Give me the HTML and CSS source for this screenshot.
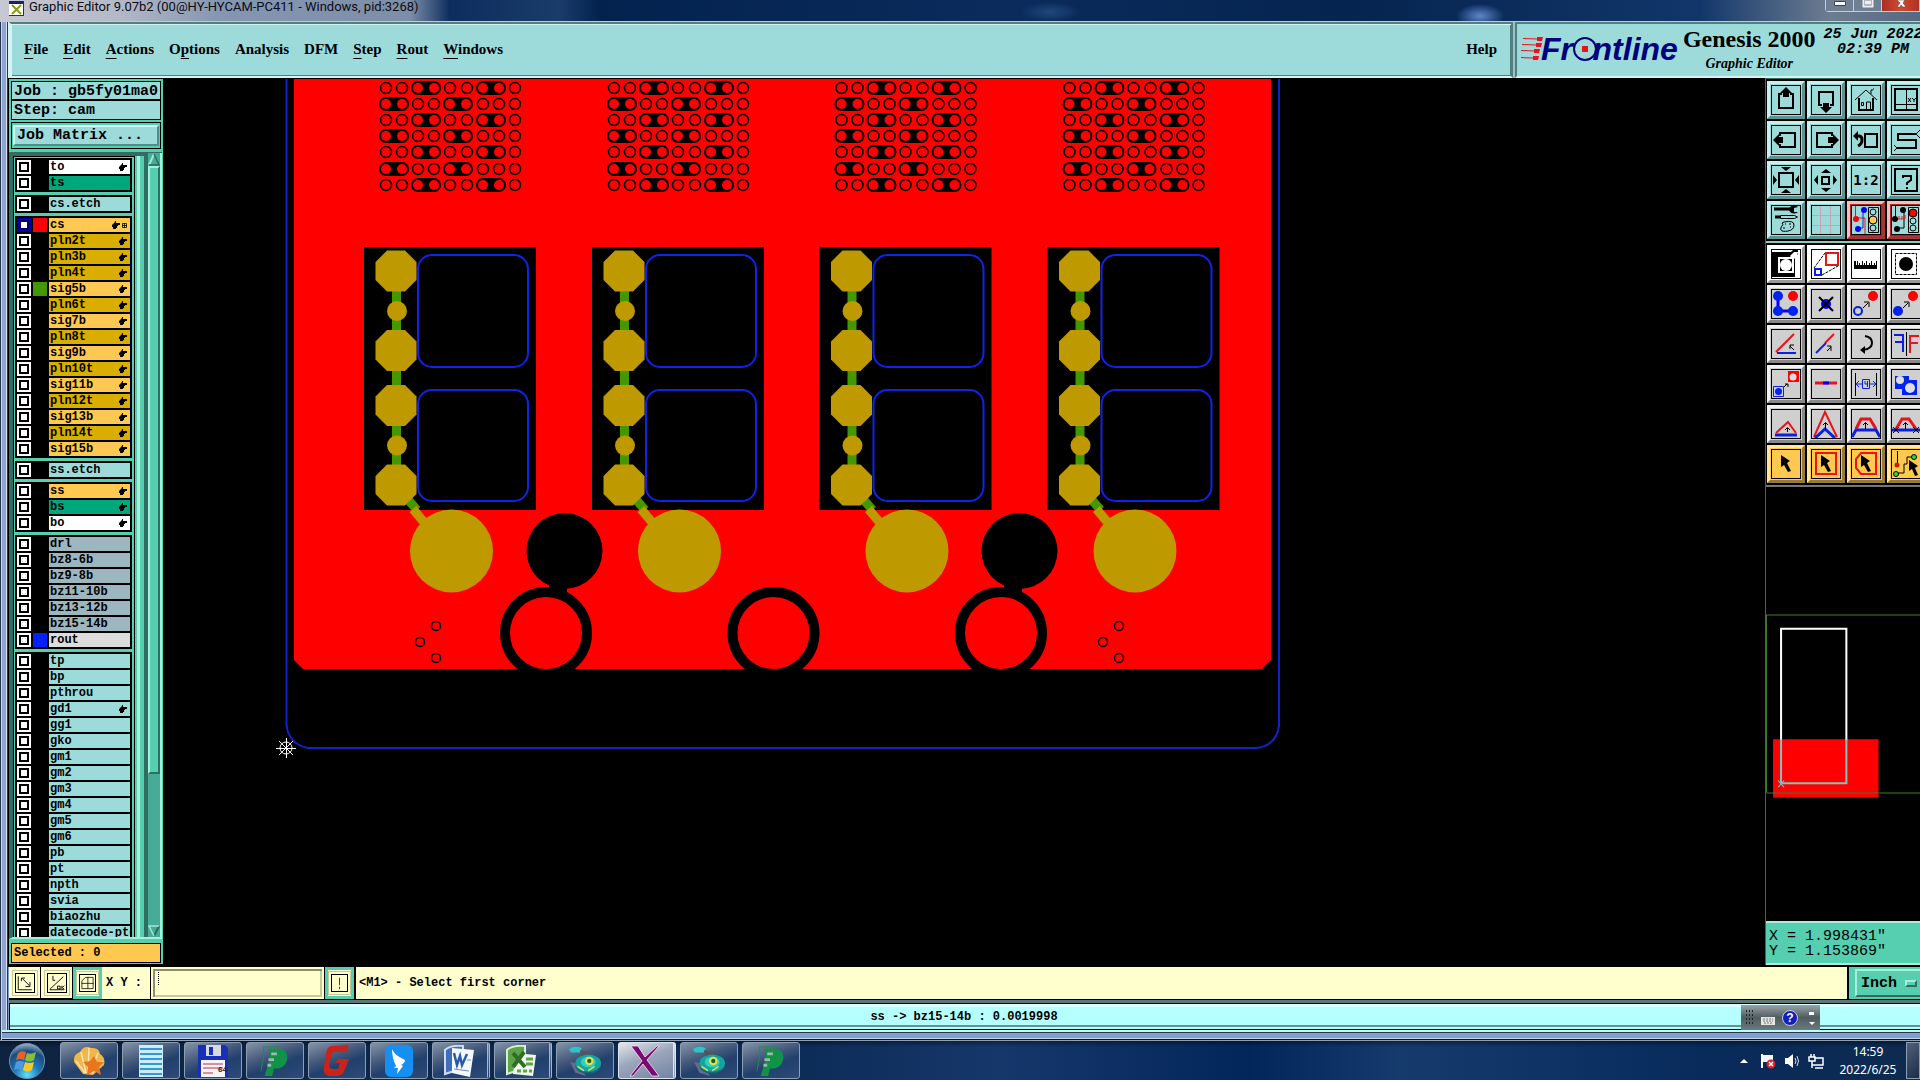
FILE: index.html
```html
<!DOCTYPE html>
<html lang="en">
<head>
<meta charset="utf-8">
<title>Graphic Editor 9.07b2</title>
<link rel="stylesheet" href="styles.css">
</head>
<body>
<svg class="defs" aria-hidden="true">
  <defs>
    <symbol id="hand" viewBox="0 0 8 8"><path d="M0 4L3 1V0h1v2h4v2H6v1H5v2H4v1H1V6H0z"/></symbol>
    <symbol id="disc" viewBox="0 0 30 30"><path d="M1 16l5 10 10 3-8-12z" fill="#666a8c"/><ellipse cx="18" cy="19" rx="12" ry="8" fill="#0f6a72"/><ellipse cx="18" cy="17" rx="12" ry="8" fill="#16a3a0"/><ellipse cx="18" cy="16" rx="7" ry="5" fill="#2ed0c2"/><circle cx="19" cy="15" r="4" fill="#e6e04a"/><circle cx="19" cy="15" r="2" fill="#1b5b30"/><path d="M0 4q5-4 12-1l-2 4H2z" fill="#2cc5c5"/><path d="M10 5l12 2-10 3z" fill="#555"/><path d="M8 20l6 4M24 20l-6 4" stroke="#c9e65a" stroke-width="1.500"/></symbol>
    <symbol id="pea" viewBox="0 0 30 34"><path d="M3 2h17M3 2v10L0 28" fill="none" stroke="#11924a" stroke-width="1"/><path d="M8 4h13q8 2 7 11-1 8-9 10h-5l-2 8H4l5-17V9z" fill="#109247"/><path d="M11 8h6v3h-6zM8 14h6v3H8zM7 20h4v3H7z" fill="#9fb7b4"/></symbol>
  </defs>
</svg>
<div class="desktop">
<div class="window">
  <div class="titlebar">
    <svg class="app-icon" width="15" height="15" viewBox="0 0 15 15"><path d="M0 0h15v15H0z" fill="#fff"/><path d="M0 0h15v3H0z" fill="#1b1f70"/><path d="M3 4l9 9M12 4l-9 9" stroke="#8f9c12" stroke-width="2"/><path d="M0 14.500h15M14.500 0v15" stroke="#333"/></svg>
    <span class="title">Graphic Editor 9.07b2 (00@HY-HYCAM-PC411 - Windows, pid:3268)</span>
    <div class="win-buttons">
      <button aria-label="Minimize"><svg width="12" height="6" viewBox="0 0 12 6"><path d="M.5 1.500h11v4H.5z" fill="#fff" stroke="#444"/></svg></button>
      <button aria-label="Restore"><svg width="12" height="8" viewBox="0 0 12 8"><path d="M1.500 0v6.500h9V0M4 1.500h4v2H4z" fill="none" stroke="#eee" stroke-width="2"/></svg></button>
      <button class="close" aria-label="Close"><svg width="12" height="8" viewBox="0 0 12 8"><path d="M2 0l3 3-3 4h3l1-2 2 2h3L8 3l2-3z" fill="#fff" stroke="#533" stroke-width=".5"/></svg></button>
    </div>
  </div>

  <header class="header">
    <nav class="menubar">
      <button><u>F</u>ile</button><button><u>E</u>dit</button><button><u>A</u>ctions</button><button>O<u>p</u>tions</button><button>Analysis</button><button>DFM</button><button><u>S</u>tep</button><button><u>R</u>out</button><button><u>W</u>indows</button><button class="help">Help</button>
    </nav>
    <div class="brand">
      <div class="logo"><svg width="22" height="24" viewBox="0 0 22 24"><g fill="#f01018"><path d="M2 1l14 .500V0h6l-1 4h-5V2.500L2 2zM1 7l14 .500V6h6l-1 4h-5V8.500L1 8zM0 13l13 .500V12h6l-1 4h-5v-1.500L0 14zM0 20l12 .500V19h6l-1 4h-5v-1.500L0 21z"/></g></svg><span class="wordmark">Fr<span class="target">o</span>ntline</span></div>
      <div class="product"><strong>Genesis 2000</strong><em>Graphic Editor</em></div>
      <div class="clock-text"><span>25 Jun 2022</span><span>02:39 PM</span></div>
    </div>
  </header>

  <main class="main">
    <aside class="sidebar">
      <div class="info">Job : gb5fy01ma0</div>
      <div class="info step">Step: cam</div>
      <div class="matrix"><button>Job Matrix ...</button></div>
      <div class="list-area">
        <div class="layers">
          <div class="group">
            <label class="layer white"><input type="checkbox"><i></i><span>to</span><svg><use href="#hand"/></svg></label>
            <label class="layer green"><input type="checkbox"><i></i><span>ts</span></label>
          </div>
          <div class="group"><label class="layer"><input type="checkbox"><i></i><span>cs.etch</span></label></div>
          <div class="group">
            <label class="layer amber current"><input type="checkbox" checked><i class="red"></i><span>cs</span><svg><use href="#hand"/></svg><svg class="plus" viewBox="0 0 5 5"><path d="M.5.5h4v4h-4zM2.500 0v5M0 2.500h5" fill="none" stroke="#000" stroke-width=".8"/></svg></label>
            <label class="layer gold"><input type="checkbox"><i></i><span>pln2t</span><svg><use href="#hand"/></svg></label>
            <label class="layer gold"><input type="checkbox"><i></i><span>pln3b</span><svg><use href="#hand"/></svg></label>
            <label class="layer gold"><input type="checkbox"><i></i><span>pln4t</span><svg><use href="#hand"/></svg></label>
            <label class="layer amber"><input type="checkbox"><i class="lime"></i><span>sig5b</span><svg><use href="#hand"/></svg></label>
            <label class="layer gold"><input type="checkbox"><i></i><span>pln6t</span><svg><use href="#hand"/></svg></label>
            <label class="layer amber"><input type="checkbox"><i></i><span>sig7b</span><svg><use href="#hand"/></svg></label>
            <label class="layer gold"><input type="checkbox"><i></i><span>pln8t</span><svg><use href="#hand"/></svg></label>
            <label class="layer amber"><input type="checkbox"><i></i><span>sig9b</span><svg><use href="#hand"/></svg></label>
            <label class="layer gold"><input type="checkbox"><i></i><span>pln10t</span><svg><use href="#hand"/></svg></label>
            <label class="layer amber"><input type="checkbox"><i></i><span>sig11b</span><svg><use href="#hand"/></svg></label>
            <label class="layer gold"><input type="checkbox"><i></i><span>pln12t</span><svg><use href="#hand"/></svg></label>
            <label class="layer amber"><input type="checkbox"><i></i><span>sig13b</span><svg><use href="#hand"/></svg></label>
            <label class="layer gold"><input type="checkbox"><i></i><span>pln14t</span><svg><use href="#hand"/></svg></label>
            <label class="layer amber"><input type="checkbox"><i></i><span>sig15b</span><svg><use href="#hand"/></svg></label>
          </div>
          <div class="group"><label class="layer"><input type="checkbox"><i></i><span>ss.etch</span></label></div>
          <div class="group">
            <label class="layer amber"><input type="checkbox"><i></i><span>ss</span><svg><use href="#hand"/></svg></label>
            <label class="layer green"><input type="checkbox"><i></i><span>bs</span><svg><use href="#hand"/></svg></label>
            <label class="layer white"><input type="checkbox"><i></i><span>bo</span><svg><use href="#hand"/></svg></label>
          </div>
          <div class="group">
            <label class="layer slate"><input type="checkbox"><i></i><span>drl</span></label>
            <label class="layer slate"><input type="checkbox"><i></i><span>bz8-6b</span></label>
            <label class="layer slate"><input type="checkbox"><i></i><span>bz9-8b</span></label>
            <label class="layer slate"><input type="checkbox"><i></i><span>bz11-10b</span></label>
            <label class="layer slate"><input type="checkbox"><i></i><span>bz13-12b</span></label>
            <label class="layer slate"><input type="checkbox"><i></i><span>bz15-14b</span></label>
            <label class="layer silver"><input type="checkbox"><i class="blue"></i><span>rout</span></label>
          </div>
          <div class="group">
            <label class="layer"><input type="checkbox"><i></i><span>tp</span></label>
            <label class="layer"><input type="checkbox"><i></i><span>bp</span></label>
            <label class="layer"><input type="checkbox"><i></i><span>pthrou</span></label>
            <label class="layer"><input type="checkbox"><i></i><span>gd1</span><svg><use href="#hand"/></svg></label>
            <label class="layer"><input type="checkbox"><i></i><span>gg1</span></label>
            <label class="layer"><input type="checkbox"><i></i><span>gko</span></label>
            <label class="layer"><input type="checkbox"><i></i><span>gm1</span></label>
            <label class="layer"><input type="checkbox"><i></i><span>gm2</span></label>
            <label class="layer"><input type="checkbox"><i></i><span>gm3</span></label>
            <label class="layer"><input type="checkbox"><i></i><span>gm4</span></label>
            <label class="layer"><input type="checkbox"><i></i><span>gm5</span></label>
            <label class="layer"><input type="checkbox"><i></i><span>gm6</span></label>
            <label class="layer"><input type="checkbox"><i></i><span>pb</span></label>
            <label class="layer"><input type="checkbox"><i></i><span>pt</span></label>
            <label class="layer"><input type="checkbox"><i></i><span>npth</span></label>
            <label class="layer"><input type="checkbox"><i></i><span>svia</span></label>
            <label class="layer"><input type="checkbox"><i></i><span>biaozhu</span></label>
            <label class="layer long"><input type="checkbox"><i></i><span>datecode-pte</span></label>
          </div>
        </div>
        <div class="gutter"></div>
        <div class="scrollbar">
          <svg width="12" height="13" viewBox="0 0 12 13"><path d="M0 0h12v13H0z" fill="#46ab97"/><path d="M1 12L6 1" stroke="#9fe8d8" stroke-width="2"/><path d="M6 1l5 11H1" fill="none" stroke="#2a6b5c" stroke-width="1.500"/></svg>
          <div class="thumb"></div>
          <div class="trough"></div>
          <svg width="12" height="12" viewBox="0 0 12 12"><path d="M11 1L6 11" stroke="#2a6b5c" stroke-width="2"/><path d="M6 11L1 1h10" fill="none" stroke="#9fe8d8" stroke-width="1.500"/></svg>
        </div>
      </div>
      <div class="selected">Selected : 0</div>
    </aside>

    <svg class="canvas" viewBox="163 78 1602 889" preserveAspectRatio="xMinYMin meet" role="img" aria-label="Board artwork">
      <defs>
        <g id="via"><circle r="5.500" fill="none" stroke="#000" stroke-width="1.500"/></g>
        <g id="slot"><rect x="-7" y="-7" width="30" height="14" rx="7"/><circle r="5" fill="red"/><circle cx="16" r="5" fill="red"/></g>
        <g id="rowA"><use href="#via"/><use href="#via" x="16"/><use href="#slot" x="32"/><use href="#via" x="64"/><use href="#via" x="81"/><use href="#slot" x="97"/><use href="#via" x="129"/></g>
        <g id="rowB"><use href="#slot"/><use href="#via" x="32"/><use href="#via" x="48"/><use href="#slot" x="64"/><use href="#via" x="97"/><use href="#via" x="113"/><use href="#via" x="129"/></g>
        <path id="oct" d="M-9-20.500H9L20.500-9V9L9 20.500H-9L-20.500 9V-9z"/>
        <g id="cell">
          <use href="#rowA" x="386" y="88"/><use href="#rowB" x="386" y="104"/><use href="#rowA" x="386" y="120"/><use href="#rowB" x="386" y="136"/><use href="#rowA" x="386" y="152"/><use href="#rowB" x="386" y="169"/><use href="#rowA" x="386" y="185"/>
          <path d="M364 247h172v263H364z"/>
          <path d="M396.500 271V490" fill="none" stroke="#439800" stroke-width="9"/>
          <path d="M398 488L417 510" stroke="#439800" stroke-width="9"/>
          <path d="M413 509L428 527" stroke="#be9a00" stroke-width="9"/>
          <g fill="none" stroke="#0f24e8" stroke-width="2"><rect x="418" y="255" width="110" height="112" rx="14"/><rect x="418" y="390" width="110" height="111" rx="14"/></g>
          <g fill="#be9a00"><use href="#oct" x="396" y="271"/><use href="#oct" x="396" y="350.500"/><use href="#oct" x="396" y="405.500"/><use href="#oct" x="396" y="485"/><circle cx="397" cy="311" r="10"/><circle cx="397" cy="445.500" r="10"/><circle cx="451.500" cy="551" r="41.500"/></g>
        </g>
        <g id="ring" fill="none" stroke="#000" stroke-width="10"><circle r="41"/></g>
        <g id="fid" fill="none" stroke="#000" stroke-width="1.500"><circle cx="16" cy="-16" r="4.500"/><circle r="4.500"/><circle cx="16" cy="16" r="4.500"/></g>
      </defs>
      <path d="M163 78h1602v889H163z"/>
      <path d="M294 79H1271V660L1262 669H303L294 660z" fill="red"/>
      <use href="#cell"/><use href="#cell" x="228"/><use href="#cell" x="455.500"/><use href="#cell" x="683.500"/>
      <circle cx="564.500" cy="551" r="38"/><circle cx="1019.500" cy="551" r="38"/>
      <path d="M549 582h18v10h-18zM1004 582h18v10h-18z"/>
      <use href="#ring" x="546" y="633"/><use href="#ring" x="773.500" y="633"/><use href="#ring" x="1001" y="633"/>
      <path d="M290 669h985v30H290z"/>
      <use href="#fid" x="420" y="642"/><use href="#fid" x="1103" y="642"/>
      <path d="M286.500 79V724Q288 744 308 748H1256Q1276 746 1279 726V79" fill="none" stroke="#0f24c8" stroke-width="2"/>
      <g fill="none" stroke="#fff"><circle cx="286" cy="748" r="6"/><path d="M276 748.500h20M286.500 738v20M279 741l14 14M293 741l-14 14"/></g>
    </svg>

    <aside class="tools">
      <div class="toolgrid">
        <button class="tool" aria-label="Pan up"><svg viewBox="1 1 28 28"><path d="M11 9H8v14h14V9h-3" class="k2"/><path d="M15 2l6 6h-3v4h-6V8H9z"/></svg></button>
        <button class="tool" aria-label="Pan down"><svg viewBox="1 1 28 28"><path d="M11 20H8V7h14v13h-3" class="k2"/><path d="M15 28l6-6h-3v-4h-6v4H9z"/></svg></button>
        <button class="tool" aria-label="Home"><svg viewBox="1 1 28 28"><path d="M4 15L15 5l11 10M20 9V5h2M22 4h1" class="k1"/><path d="M8 13v12h14V13" class="k2"/><path d="M15.500 25v-8h4v8M10.500 17.500h2v3h-2z" class="k1"/></svg></button>
        <button class="tool" aria-label="Views"><svg viewBox="1 1 28 28"><path d="M4 4h22v21H4z" class="k2"/><path d="M15.500 4v21M4 19.500h22M17 13l3 4M20 13l-3 4M21 13l2 2 2-2M23 15v2" class="k1"/></svg></button>

        <button class="tool" aria-label="Pan left"><svg viewBox="1 1 28 28"><path d="M9 11V8h15v14H9v-3" class="k2"/><path d="M2 15l6-6v3h4v6H8v3z"/></svg></button>
        <button class="tool" aria-label="Pan right"><svg viewBox="1 1 28 28"><path d="M21 11V8H6v14h15v-3" class="k2"/><path d="M28 15l-6-6v3h-5v6h5v3z"/></svg></button>
        <button class="tool" aria-label="Previous view"><svg viewBox="1 1 28 28"><path d="M14 9h12v13H14z" class="k2"/><path d="M5 11h3q3 0 3 4t-4 6" class="k3"/><path d="M2 11l5-5v10z"/></svg></button>
        <button class="tool" aria-label="Serpentine"><svg viewBox="1 1 28 28"><path d="M26 9H7v6h18v8H6" class="k2"/><path d="M25 9l4-4M25 9l4 4M6 23l-3-3M6 23l-3 3" class="k1"/></svg></button>

        <button class="tool" aria-label="Zoom in"><svg viewBox="1 1 28 28"><path d="M8 8h14v14H8z" class="k2"/><path d="M10 2h10l-5 4zM10 28h10l-5-4zM2 10v10l4-5zM28 10v10l-4-5z"/></svg></button>
        <button class="tool" aria-label="Zoom out"><svg viewBox="1 1 28 28"><path d="M11 12h7v7h-7z" class="k2"/><path d="M10 8h10l-5-4zM10 23h10l-5 4zM7 10v10l-4-5zM22 10v10l4-5z"/></svg></button>
        <button class="tool" aria-label="Actual scale"><span>1:2</span></button>
        <button class="tool" aria-label="Query"><svg viewBox="1 1 28 28"><path d="M4 4h22v22H4z" class="k2"/><path d="M12 13V11h8v4l-4 3v2M16 22v2" class="k2"/></svg></button>

        <button class="tool" aria-label="Setup"><svg viewBox="1 1 28 28"><path d="M3 4h16M4 12h5" class="k3"/><path d="M27 2a5 4 0 1 0 0 5h-4V3z"/><path d="M9.500 10.500h14l3 1.500-3 1.500h-14z" class="k1"/><path d="M13 17q10-2 10 3t-6 6-7-1 1-4 0-3zM12 23h2M14 19h1M18 19h2M19 22h1" class="k1"/></svg></button>
        <button class="tool" aria-label="Grid"><svg viewBox="1 1 28 28"><path d="M9.500 0v30M19.500 0v30M0 10.500h30M0 20.500h30" fill="none" stroke="#c9a5b0"/></svg></button>
        <button class="tool alert" aria-label="Net check"><svg viewBox="1 1 28 28"><path d="M4.500 1v11M4 13h10v16" class="r1"/><path d="M12 5v18H6" class="b1"/><circle cx="5" cy="14" r="3" fill="red"/><circle cx="13" cy="5" r="3" fill="#00f"/><circle cx="7" cy="24" r="3" fill="#00f"/><path d="M17.500 2.500h10v25h-10z" class="k1"/><circle cx="22" cy="7" r="3" class="k1"/><circle cx="22" cy="15" r="4" fill="#ffc850" stroke="#000"/><circle cx="22" cy="23" r="3" class="k1"/></svg></button>
        <button class="tool alert" aria-label="Net stop"><svg viewBox="1 1 28 28"><path d="M4.500 1v13H7M13 5v18H6" class="k1"/><path d="M6 14h8v-4M8 14v-3M11 14v-3" class="r1"/><circle cx="4" cy="14" r="3"/><circle cx="12" cy="5" r="3"/><circle cx="6" cy="24" r="3"/><path d="M17.500 2.500h10v25h-10z" class="k1"/><circle cx="22" cy="8" r="4" fill="red" stroke="#000"/><circle cx="22" cy="16" r="3" class="k1"/><circle cx="22" cy="23" r="3" class="k1"/></svg></button>
      </div>
      <div class="toolgrid second">
        <button class="tool white" aria-label="Feature select"><svg viewBox="1 1 28 28"><path d="M1 3h19l2-2h5v4l-3 3v20H1z"/><path d="M8 9h14v14H8z" fill="none" stroke="#fff" stroke-width="2"/><circle cx="15" cy="16" r="6" fill="#fff"/><path d="M19 7l4-4 4 0-1 4-4 4z" fill="#fff"/></svg></button>
        <button class="tool white" aria-label="Resize feature"><svg viewBox="1 1 28 28"><path d="M15 4h12v12H15z" class="r2"/><path d="M4 20h6v6H4z" class="b2"/><path d="M3 19L14 4M11 26l16-9" class="k1" stroke-dasharray="3 1"/></svg></button>
        <button class="tool white" aria-label="Measure"><svg viewBox="1 1 28 28"><path d="M3 12h2v4h1v-4h1v4h1v-2h1v2h2v-4h1v4h1v-2h1v2h1v-4h1v4h2v-2h1v2h1v-4h1v4h2v-2h1v2h1v-4h1v8H3z"/></svg></button>
        <button class="tool white" aria-label="Pad select"><svg viewBox="1 1 28 28"><path d="M4.500 4.500h21v21h-21z" class="k1" stroke-dasharray="3 1"/><circle cx="15" cy="15" r="7"/></svg></button>

        <button class="tool grey" aria-label="Add line"><svg viewBox="1 1 28 28"><path d="M7 7v15h15" fill="none" stroke="#00f" stroke-width="3"/><circle cx="7" cy="7" r="5" fill="#0022f0"/><circle cx="7" cy="22" r="5" fill="#0022f0"/><circle cx="22" cy="22" r="5" fill="#0022f0"/><circle cx="22" cy="7" r="5" fill="#f00"/></svg></button>
        <button class="tool grey" aria-label="Delete"><svg viewBox="1 1 28 28"><circle cx="15" cy="15" r="5" fill="#00f"/><path d="M8 8l14 14M22 8L8 22" class="k2"/></svg></button>
        <button class="tool grey" aria-label="Move"><svg viewBox="1 1 28 28"><circle cx="22" cy="7" r="5" fill="red"/><circle cx="7" cy="22" r="4" class="b2"/><path d="M12 19l5-5M13 13h5v5" class="k1"/></svg></button>
        <button class="tool grey" aria-label="Copy"><svg viewBox="1 1 28 28"><circle cx="22" cy="7" r="5" fill="red"/><circle cx="7" cy="22" r="5" fill="#0022f0"/><path d="M12 19l5-5M13 13h5v5" class="k1"/></svg></button>

        <button class="tool grey" aria-label="Rotate"><svg viewBox="1 1 28 28"><path d="M5 23L23 5" class="r2"/><path d="M6 24h19" class="b2"/><path d="M23 21l-4-4M19 20v-4h4" class="k1"/></svg></button>
        <button class="tool grey" aria-label="Stretch"><svg viewBox="1 1 28 28"><path d="M14 14l9-9" class="r2"/><path d="M5 24l10-10" class="b2"/><path d="M16 22l4-4M16 17h4v5" class="k1"/></svg></button>
        <button class="tool grey" aria-label="Turn"><svg viewBox="1 1 28 28"><path d="M14 7q7 1 7 7t-9 7" class="k2"/><path d="M9 21l5-4v8z"/></svg></button>
        <button class="tool grey" aria-label="Mirror"><svg viewBox="1 1 28 28"><path d="M3 6h9v17M4 13h8" class="b2"/><path d="M15.500 3v24" class="k1"/><path d="M28 7h-9v17M19 14h8" class="r2"/></svg></button>

        <button class="tool grey" aria-label="Substitute"><svg viewBox="1 1 28 28"><path d="M17 2h11v11H17z" fill="red"/><circle cx="22" cy="8" r="3.500" fill="#ddd"/><path d="M2.500 17.500h10v10h-10z" class="b1"/><circle cx="7.500" cy="22.500" r="3.500" fill="#0022f0"/><path d="M13 18l3-3M14 15h3v3" class="k1"/></svg></button>
        <button class="tool grey" aria-label="Break line"><svg viewBox="1 1 28 28"><path d="M4 14h22" class="r3"/><path d="M12 14h6" stroke="#00f" stroke-width="3"/></svg></button>
        <button class="tool grey" aria-label="Spacing"><svg viewBox="1 1 28 28"><path d="M4.500 4v23M25.500 4v23" class="k1"/><path d="M11.500 10.500h7v9h-7zM14 12v3h3M16.500 12v6M5 15h6M19 15h6M8 12l-3 3 3 3M22 12l3 3-3 3" class="b1"/></svg></button>
        <button class="tool grey" aria-label="Merge"><svg viewBox="1 1 28 28"><path d="M4 7h14v4h8v15H11v-6H4z" fill="#0022f0"/><circle cx="9" cy="11" r="4" fill="#ddd"/><circle cx="19" cy="19" r="5" fill="#ddd"/></svg></button>

        <button class="tool grey" aria-label="Drag corner"><svg viewBox="1 1 28 28"><path d="M5 24L17 13l8 11" class="r2"/><path d="M4 26h22" class="b3"/><path d="M16.500 23v-4M14 21l2.500-2.500L19 21" class="k1"/></svg></button>
        <button class="tool grey" aria-label="Drag edge"><svg viewBox="1 1 28 28"><path d="M3 28L14 3l12 25" class="r2"/><path d="M4 29l10-9 10 9" class="b3"/><path d="M14.500 21v-7M12 16l2.500-2.500L17 16" class="k1"/></svg></button>
        <button class="tool grey" aria-label="Drag plateau"><svg viewBox="1 1 28 28"><path d="M5 20l5-10h9l6 10" class="r3"/><path d="M1 28l4-7h20l4 7" class="b3"/><path d="M14.500 20v-6M12 16l2.500-2.500L17 16" class="k1"/></svg></button>
        <button class="tool grey" aria-label="Drag segment"><svg viewBox="1 1 28 28"><path d="M5 20l6-10h7l7 10" class="r3"/><path d="M0 21h30" class="b3"/><path d="M14.500 20v-6M12 16l2.500-2.500L17 16M2 18l6 6M8 18l-6 6M22 18l6 6M28 18l-6 6" class="k1"/></svg></button>

        <button class="tool gold" aria-label="Select"><svg viewBox="1 1 28 28"><path d="M10 6l9 6-3 2 4 8-3 1-4-7-3 2z"/></svg></button>
        <button class="tool gold" aria-label="Select in frame"><svg viewBox="1 1 28 28"><path d="M5 4h20v21H5z" class="r2"/><path d="M10 6l9 6-3 2 4 8-3 1-4-7-3 2z"/></svg></button>
        <button class="tool gold" aria-label="Select in polygon"><svg viewBox="1 1 28 28"><path d="M10 4h15v21H10l-5-6V10z" class="r2"/><path d="M10 6l9 6-3 2 4 8-3 1-4-7-3 2z"/></svg></button>
        <button class="tool gold" aria-label="Select net"><svg viewBox="1 1 28 28"><path d="M6.500 2v13M6 24h7v-9h3V8h6" class="k1"/><circle cx="6" cy="16" r="2.500" fill="#c22000"/><circle cx="23" cy="8" r="2.500" fill="#2fdd2f" stroke="#000"/><circle cx="5" cy="25" r="2.500" fill="#2fdd2f" stroke="#000"/><path d="M18 11l9 6-3 2 3 7-3 1-3-7-3 2z"/></svg></button>
      </div>
      <div class="overview">
        <svg viewBox="1766 489 154 432" preserveAspectRatio="xMinYMin slice"><path d="M1773 740h105v58h-105z" fill="red"/><path d="M1766.500 616.500H1925M1766.500 793.500H1925M1766.500 616v177" fill="none" stroke="#3f7d2c"/><path d="M1781 741V630h65v111" fill="none" stroke="#fff" stroke-width="2"/><path d="M1781 740v44h65v-44" fill="none" stroke="#7fc4c4" stroke-width="2"/><path d="M1778 781l6 7M1784 781l-6 7" stroke="#5cc"/></svg>
      </div>
      <div class="coords"><span>X = 1.998431"</span><span>Y = 1.153869"</span></div>
    </aside>
  </main>

  <div class="command">
    <button class="mini" aria-label="Snap off"><svg viewBox="0 0 20 20"><path d="M2.500 2.500v15h15M7 5l8 8M6 8V4.500h4M15.500 9v5h-5" class="k1"/></svg></button>
    <button class="mini" aria-label="Snap angle"><svg viewBox="0 0 20 20"><path d="M2 17.500h16M2 17L17 3M5.500 2v5H8M10.500 13.500h3v3h-3zM15.500 13v4M18 13l-2 2 2 2" class="k1"/></svg></button>
    <button class="mini framed" aria-label="Snap grid"><svg viewBox="0 0 20 20"><path d="M2.500 17.500V7l5-4.500h10v15zM10.500 2v16M2 10.500h16" class="k1"/></svg></button>
    <label class="xy" for="xy">X Y :</label>
    <input id="xy" class="xy-input" type="text">
    <button class="mini framed bang" aria-label="Abort"><svg viewBox="0 0 20 20"><path d="M10 3v10M10 15v3" class="k1"/></svg></button>
    <div class="message">&lt;M1&gt; - Select first corner</div>
    <div class="units"><select aria-label="Units"><option>Inch</option><option>mm</option></select><span class="knob"></span></div>
  </div>
  <div class="status">ss -&gt; bz15-14b : 0.0019998</div>
  <div class="ime">
    <svg width="79" height="25" viewBox="0 0 79 25"><path d="M5 6h8M5 10h8M5 14h8M5 18h8" stroke="#222" stroke-width="2" stroke-dasharray="1 2"/><path d="M20 12h14v8H20z" fill="#e6e6e6"/><path d="M22 14h10M22 16h10M23 18h8M22 11q3-4 8-1" fill="none" stroke="#777" stroke-dasharray="2 1"/><circle cx="49" cy="13" r="7.500" fill="#1020c0" stroke="#ccd"/><path d="M68 9h5M68 8h5" stroke="#fff" stroke-width="2"/><path d="M68 17h6l-3 3z" fill="#fff"/></svg><b>?</b>
  </div>
</div>

<footer class="taskbar">
  <button class="start" aria-label="Start"><svg width="38" height="38" viewBox="0 0 38 38"><defs><radialGradient id="orb" cx=".5" cy=".9" r=".9"><stop offset="0" stop-color="#5fe0ff"/><stop offset=".4" stop-color="#1b78b8"/><stop offset=".75" stop-color="#1d4a7c"/><stop offset="1" stop-color="#9cb4c8"/></radialGradient></defs><circle cx="19" cy="19" r="17.500" fill="url(#orb)" stroke="#6d93b5"/><path d="M10 11q4-3 8-1l-2 8q-4-2-8 0z" fill="#e8602a"/><path d="M19 11q4 2 9-1l-2 8q-5 3-9 0z" fill="#86bf3a"/><path d="M8 20q4-2 8 0l-2 8q-4-2-8 0z" fill="#4a9be0"/><path d="M17 20q4 2 9 0l-2 8q-4 3-9 0z" fill="#f6c62a"/></svg></button>
  <button class="task" aria-label="Shell"><svg viewBox="0 0 32 32"><path d="M10 29L1 17q-1-8 6-10 4-7 11-4 8-1 9 6 6 4 4 11L20 30z" fill="#f0b64c"/><path d="M12 28L3 16M13 28L8 7M15 28L16 3M17 28l8-20M19 28l11-12" stroke="#fbe6b0" stroke-width="1.500"/><path d="M21 11l3 6 7 0-5 5 2 8-7-4-7 4 1-8-5-5 7-1z" fill="#e8761c"/></svg></button>
  <button class="task" aria-label="Notes"><svg viewBox="0 0 32 32"><path d="M4 0h24v32H4z" fill="#cfeaf8"/><path d="M5 4h22M5 9h22M5 14h22M5 19h22M5 24h22M5 29h22" stroke="#2f9bd0" stroke-width="2"/></svg></button>
  <button class="task" aria-label="Disk"><svg viewBox="0 0 32 32"><path d="M1 0h27l3 3v29H1z" fill="#1a2fb8"/><path d="M9 0h15v11H9z" fill="#d5d9e0"/><path d="M12 2h4v8h-4z" fill="#1a2fb8"/><path d="M4 15h24v17H4z" fill="#f6f4f4"/><path d="M6 19h20M6 23h20M6 28h10" stroke="#b03048"/></svg><b>64</b></button>
  <button class="task" aria-label="P tool"><svg viewBox="0 0 32 32"><use href="#pea"/></svg></button>
  <button class="task" aria-label="G tool"><svg viewBox="0 0 32 32"><path d="M10 1l18-1-2 7H14q-3 0-4 5l-2 8q0 4 4 4h5l2-6h-5l3-4h11l-4 10q-2 7-8 7H8q-7-2-5-10l2-12Q6 2 10 1z" fill="#c9241c"/></svg></button>
  <button class="task" aria-label="Messenger"><svg viewBox="0 0 32 32"><rect x="2" width="28" height="32" rx="6" fill="#1490f4"/><path d="M9 4q2 6 13 11 0 3-4 5l2 1-6 8 1-6h-4l2-2q-4-8-4-17z" fill="#fff"/></svg></button>
  <button class="task stacked" aria-label="Word"><svg viewBox="0 0 32 32"><path d="M2 5q5-5 18-4v22L2 29z" fill="#3f6fb8" stroke="#cfdcf0" stroke-width="2"/><path d="M9 3l22 2-4 27-18-4z" fill="#f4f7fc"/><path d="M11 8l3 12 3-9 2 9 5-11" fill="none" stroke="#2b5aa8" stroke-width="2.500"/><path d="M11 24l15 2M24 15h4" stroke="#6b8dc6"/></svg></button>
  <button class="task stacked" aria-label="Excel"><svg viewBox="0 0 32 32"><path d="M2 5q5-5 18-4v22L2 29z" fill="#5da447" stroke="#d9efd2" stroke-width="2"/><path d="M20 9l11 1-3 21-20-2 1-8z" fill="#f1f9ee"/><path d="M8 8l12 14M19 7L8 22" stroke="#2f6d28" stroke-width="4"/><path d="M21 14h7M21 19h7M12 26h4M18 26h4M24 26h3" stroke="#5da447" stroke-width="3"/></svg></button>
  <button class="task" aria-label="Disc tool"><svg viewBox="0 0 32 32"><use href="#disc"/></svg></button>
  <button class="task stacked active" aria-label="X server"><svg viewBox="0 0 32 32"><path d="M2 1h7l7 11L28 1h2L18 15l12 16h-7L14 19 4 31H1l12-15z" fill="#7a0a72" stroke="#f5e6f5" stroke-width=".8"/></svg></button>
  <button class="task" aria-label="Disc tool 2"><svg viewBox="0 0 32 32"><use href="#disc"/></svg></button>
  <button class="task" aria-label="P tool 2"><svg viewBox="0 0 32 32"><use href="#pea"/></svg></button>
  <div class="tray">
    <svg width="84" height="20" viewBox="0 0 84 20"><path d="M0 12h8L4 8z" fill="#fff"/><path d="M22 3v14" stroke="#fff" stroke-width="2"/><path d="M23 4h10v7H23z" fill="#f4f4f4"/><circle cx="31" cy="13" r="4.500" fill="#d8222a"/><path d="M29 11l4 4M33 11l-4 4" stroke="#fff" stroke-width="1.500"/><path d="M45 7h3l5-4v14l-5-4h-3z" fill="#fff"/><path d="M55 7q2 3 0 6M57 5q3 5 0 10" fill="none" stroke="#dde"/><path d="M74 7h9v7H72v-4M75 17h8M71 3v3M74 3v3M69 6h6v4h-6zM72 10v7" fill="none" stroke="#fff" stroke-width="1.500"/></svg>
    <div class="time"><span>14:59</span><span>2022/6/25</span></div>
    <button class="show-desktop" aria-label="Show desktop"></button>
  </div>
</footer>
</div>
</body>
</html>
```
FILE: styles.css
```css
* { box-sizing: border-box; }

:root {
  --pale: #9cdbda;
  --teal: #56ceb0;
  --teal-dark: #2f6e60;
  --teal-light: #a6efdd;
  --amber: #ffc850;
  --cream: #ffffce;
  --mono: "Liberation Mono", "Courier New", monospace;
  --serif: "Liberation Serif", "Times New Roman", serif;
}

body { margin: 0; background: #000; overflow: hidden; font-family: var(--mono); font-weight: bold; color: #000; }
button { margin: 0; padding: 0; border: 0; background: none; font: inherit; color: inherit; }
svg { display: block; flex: none; }
.defs { position: absolute; width: 0; height: 0; }

.k1, .k2, .k3 { fill: none; stroke: #000; stroke-width: 1; }
.k2 { stroke-width: 2; }
.k3 { stroke-width: 3; }
.r1, .r2, .r3 { fill: none; stroke: #e8141c; stroke-width: 1; }
.r2 { stroke-width: 2; }
.r3 { stroke-width: 3; }
.b1, .b2, .b3 { fill: none; stroke: #0a22e0; stroke-width: 1; }
.b2 { stroke-width: 2; }
.b3 { stroke-width: 3; }

.desktop { display: flex; flex-direction: column; height: 100vh; }
.window {
  position: relative; flex: 1; min-height: 0;
  display: flex; flex-direction: column;
  padding: 0 0 10px 8px;
  background: linear-gradient(90deg, #24344e 0 1px, #c9d6ea 1px 2px, #8fa5cf 2px 6px, #d8e4f4 6px 7px, #333 7px 8px, #7d9cc8 8px);
}
.window::after {
  content: ""; position: absolute; left: 2px; right: 0; bottom: 0; height: 10px;
  background: linear-gradient(#b5ffff 0 2px, #26364c 2px 3px, #7fa0cc 3px 8px, #c8d8ea 8px 9px, #111 9px);
}

/* Title bar */
.titlebar {
  flex: none; display: flex; align-items: flex-start; height: 22px; margin-left: -8px; padding-left: 9px; gap: 5px;
  border-bottom: 1px solid #c2ccd8;
  background:
    radial-gradient(ellipse 24px 12px at 1480px 16px, #5f86cc, transparent),
    radial-gradient(ellipse 30px 10px at 1050px 12px, #35639a88, transparent),
    linear-gradient(90deg, #c8c8d2 0, #b4b8c6 120px, #8496b0 220px, #7c8ea8 410px, #0c2d5e 450px, #1a3c6a 560px, #03224e 600px, #0a2b5c 1000px, #05244f 1350px, #12366a 1700px, #6d7d90 1830px, #556882 100%);
}
.app-icon { margin-top: 1px; }
.title { font: 13px/14px Roboto, "Noto Sans", sans-serif; color: #0c0c14; }
.win-buttons { display: flex; margin-left: auto; height: 12px; border: solid #c5ced9; border-width: 0 0 1px 1px; border-radius: 0 0 0 4px; }
.win-buttons button { display: flex; justify-content: center; width: 28px; background: #6f7f94; border-right: 1px solid #c5ced9; }
.win-buttons .close { width: 38px; background: linear-gradient(90deg, #a83024, #d04a30, #b03020); }

/* Menu bar and brand panel */
.header { flex: none; display: flex; gap: 2px; height: 56px; border-left: 1px solid #d5f4f4; background: #9cc4c8; }
.menubar, .brand { background: var(--pale); border: solid; border-width: 2px; border-color: #4f7f7f #4f7f7f #d5f4f4 #d5f4f4; }
.menubar {
  flex: 1; display: flex; align-items: center; gap: 15px; padding: 0 14px 2px 13px;
  box-shadow: inset 1px 1px #d5f4f4, inset -1px -1px #4f7f7f;
  font: bold 15px/20px var(--serif);
}
.menubar u { text-underline-offset: 4px; text-decoration-thickness: 1px; }
.menubar .help { margin-left: auto; }
.brand { flex: none; display: flex; width: 405px; padding-left: 4px; border-left-color: #4f7f7f; border-right: 0; overflow: hidden; }
.logo { flex: none; display: flex; align-items: center; color: #00007c; padding-bottom: 2px; }
.logo svg { margin-right: -2px; }
.wordmark { font: italic bold 32px/36px "Liberation Sans", Arial, sans-serif; }
.target { position: relative; color: transparent; }
.target::after {
  content: ""; position: absolute; left: 0; bottom: 6px; width: 20px; height: 20px;
  border: 2px solid #00007c; border-radius: 50%;
  background: linear-gradient(45deg, #e8141c, #e8141c) center / 6px 6px no-repeat;
}
.product { flex: none; display: flex; flex-direction: column; align-items: center; margin-left: 5px; font-family: var(--serif); }
.product strong { font-size: 24px; line-height: 30px; }
.product em { font-size: 14px; line-height: 20px; }
.clock-text { display: flex; flex-direction: column; align-items: center; flex: none; margin-left: 8px; padding-top: 3px; font-size: 15px; line-height: 15px; font-style: italic; }

/* Layer panel */
.main { flex: 1; min-height: 0; display: flex; background: #000; }
.sidebar {
  flex: none; display: flex; flex-direction: column; width: 155px; margin-bottom: 3px;
  padding: 2px 2px 1px; border: solid #000; border-width: 1px 0 0 1px; background: var(--teal);
}
.info { flex: none; height: 19px; padding: 1px 0 0 2px; border: 1px solid #000; background: var(--pale); font-size: 15px; line-height: 17px; white-space: nowrap; }
.info.step { height: 20px; }
.matrix { flex: none; height: 27px; margin: 2px 0 3px; padding: 2px 1px; border: 1px solid #000; }
.matrix button { width: 100%; height: 21px; padding-left: 2px; text-align: left; background: var(--pale); border: 2px solid; border-color: #d5f4f4 #4f8d8d #4f8d8d #d5f4f4; font-size: 15px; line-height: 17px; }
.list-area { flex: 1; min-height: 0; display: flex; margin: 0 -1px 0 -2px; border: solid var(--teal-dark); border-width: 4px 0 0 4px; border-bottom: 2px solid var(--teal-light); }
.layers { width: 122px; overflow: hidden; padding: 1px 1px 0; border: 1px solid #000; border-bottom: 0; background: var(--teal); }
.group { display: flex; flex-direction: column; gap: 2px; width: 117px; margin-bottom: 3px; padding: 2px; background: #000; }
.layer { display: flex; align-items: center; gap: 2px; height: 14px; padding-right: 3px; font-size: 12px; line-height: 14px; background: linear-gradient(90deg, #000 32px, var(--row, var(--pale)) 32px); }
.layer.long { padding-right: 0; }
.layer input { appearance: none; flex: none; margin: 0; width: 14px; height: 14px; border: 2px solid #fff; background: #fff; box-shadow: inset 0 0 0 2px #000; }
.layer.current input { border-color: #00a; box-shadow: inset 0 0 0 2px #006; }
.layer i { flex: none; width: 14px; height: 14px; }
.layer span { flex: 1; padding-left: 1px; overflow: hidden; white-space: nowrap; }
.layer svg { width: 8px; height: 8px; }
.layer .plus { width: 5px; height: 5px; }
.layer.white { --row: #fff; }
.layer.green { --row: #00a67c; }
.layer.amber { --row: var(--amber); }
.layer.gold { --row: #daae00; }
.layer.slate { --row: #9cb6c0; }
.layer.silver { --row: #dcdcdc; }
.red { background: red; }
.lime { background: #439800; }
.blue { background: #0020ff; }
.gutter { flex: 1; background: linear-gradient(90deg, var(--teal) 0 2px, var(--teal-light) 2px 5px, var(--teal) 5px 9px, var(--teal-dark) 9px); }
.scrollbar { flex: none; display: flex; flex-direction: column; width: 14px; margin-top: -3px; background: linear-gradient(90deg, transparent 12px, var(--teal-light) 12px), #46ab97; }
.thumb { flex: 4; width: 12px; background: var(--teal); border: 2px solid; border-color: var(--teal-light) var(--teal-dark) var(--teal-dark) var(--teal-light); }
.trough { flex: 1; }
.selected { flex: none; height: 20px; margin-top: 4px; padding: 1px 0 0 2px; border: 1px solid #000; background: var(--amber); font-size: 12px; line-height: 17px; }

.canvas { flex: 1; min-width: 0; height: 100%; background: #000; }

/* Tool panel */
.tools { flex: none; display: flex; flex-direction: column; width: 155px; margin-bottom: 2px; overflow: hidden; border-left: 1px solid var(--teal-dark); border-top: 1px solid var(--teal-dark); }
.toolgrid { flex: none; display: grid; grid-template-columns: repeat(4, 38px); grid-auto-rows: 38px; gap: 2px; padding: 2px 0 2px 1px; background: #000; }
.toolgrid.second { border-top: 2px solid #8fc8be; border-bottom: 2px solid #777; }
.tool { display: flex; align-items: center; justify-content: center; background: var(--pale); border: 3px solid; border-color: #cbeeee #5b9494 #5b9494 #cbeeee; }
.tool svg, .tool span { width: 30px; height: 30px; border: 1px solid #000; }
.tool span { font: bold 14px/28px "DejaVu Sans Mono", monospace; text-align: center; }
.tool.white { background: #fff; border-color: #fff #999 #999 #fff; }
.tool.grey { background: #cfcfcf; border-color: #f2f2f2 #888 #888 #f2f2f2; }
.tool.gold { background: var(--amber); border-color: #ffe6a8 #9a7a30 #9a7a30 #ffe6a8; }
.tool.alert { border-color: #f0c0c0 #a33 #a33 #f0c0c0; background: #b02020; }
.tool.alert svg { background: var(--pale); }
.overview { flex: 1; min-height: 0; }
.overview svg { width: 100%; height: 100%; }
.coords { flex: none; display: flex; flex-direction: column; height: 44px; padding: 6px 0 0 3px; border-top: 2px solid var(--teal-light); border-bottom: 2px solid var(--teal-light); background: var(--teal); font-size: 15px; line-height: 15px; font-weight: normal; white-space: nowrap; }

/* Command line */
.command { flex: none; display: flex; height: 36px; margin-left: 1px; background: #000; border-bottom: 3px solid #5b7878; font-size: 12px; box-shadow: inset 0 -1px #000; }
.mini { flex: none; display: flex; align-items: center; justify-content: center; width: 31px; height: 31px; margin-right: 1px; background: var(--cream); }
.mini svg { width: 20px; height: 20px; border: 1px solid #000; outline: 1px solid #c6c69a; outline-offset: 2px; }
.mini.framed { width: 29px; height: 32px; border: 3px solid var(--teal); margin-right: 0; }
.mini.framed svg { width: 17px; height: 18px; }
.mini.bang { margin: 0 2px 0 1px; }
.xy { width: 48px; padding-left: 4px; height: 32px; line-height: 32px; background: var(--cream); white-space: nowrap; }
.xy-input {
  width: 173px; height: 32px; margin-left: 1px; border: 2px solid var(--cream);
  box-shadow: inset 2px 2px #8d8d72, inset -2px -2px #c8c89c;
  background: repeating-linear-gradient(#000 0 1px, transparent 1px 2px) 5px 3px / 1px 14px no-repeat var(--cream);
  font: bold 12px var(--mono);
}
.message { flex: 1; height: 32px; padding-left: 3px; background: var(--cream); line-height: 33px; }
.units { position: relative; flex: none; width: 71px; height: 32px; margin-left: 2px; padding: 2px 0 2px 6px; background: var(--teal); overflow: hidden; }
.units select { appearance: none; width: 80px; height: 28px; padding: 0 0 0 4px; border: 2px solid; border-color: var(--teal-light) var(--teal-dark) var(--teal-dark) var(--teal-light); border-radius: 0; background: var(--teal); color: #000; font: bold 15px var(--mono); }
.knob { position: absolute; left: 56px; top: 13px; width: 12px; height: 7px; border: 2px solid; border-color: var(--teal-light) var(--teal-dark) var(--teal-dark) var(--teal-light); }
.status { flex: none; height: 27px; margin-left: 1px; padding-right: 2px; border: 1px solid #000; border-right: 0; background: #b5ffff; box-shadow: inset 0 3px #d8ffff, inset 0 -2px #b5ffff, inset 0 -4px #5f9494; text-align: center; font-size: 12px; line-height: 26px; }
.ime { position: absolute; right: 100px; bottom: 10px; width: 79px; height: 25px; background: linear-gradient(#9aa6a8, #4f5c60 50%, #6b7a7c); }
.ime b { position: absolute; left: 45px; top: 5px; width: 8px; color: #fff; font: bold 12px/16px "Liberation Sans", sans-serif; text-align: center; }

/* Task bar */
.taskbar { flex: none; display: flex; align-items: stretch; gap: 4px; height: 40px; padding: 1px 0; background: linear-gradient(#0006, #0000 6px), linear-gradient(90deg, #0e2340, #0c2c58 800px, #16376a 1000px, #03265a 1250px, #153a6c 1400px, #082b5c 1700px, #0e2a50); border-top: 1px solid #8fa0b4; }
.start { flex: none; width: 56px; display: flex; align-items: center; justify-content: center; padding-right: 2px; }
.task { position: relative; flex: none; display: flex; align-items: center; justify-content: center; width: 58px; border: 1px solid #8c9db4; border-radius: 3px; background: linear-gradient(160deg, #8594a8, #42587a 40%, #22406c 60%, #2d4a78); }
.task svg { width: 32px; height: 32px; }
.task b { position: absolute; left: 33px; top: 22px; font: bold 8px/10px "Liberation Sans", sans-serif; color: #222; }
.task.stacked { padding-right: 3px; border-right: 3px double #a8b6c8; }
.task.active { background: linear-gradient(160deg, #e4e6ea, #9aa6ba 45%, #7384a4); border-color: #dfe5ee; }
.tray { display: flex; align-items: center; margin-left: auto; gap: 14px; color: #fff; }
.tray > svg { margin-right: -1px; }
.time { display: flex; flex-direction: column; align-items: center; font: 12px/18px "Noto Sans", "Open Sans", sans-serif; width: 62px; }
.show-desktop { align-self: stretch; width: 14px; margin-left: -7px; border: 1px solid #8c9db4; background: linear-gradient(135deg, #51617a, #1c2c48); }
```
